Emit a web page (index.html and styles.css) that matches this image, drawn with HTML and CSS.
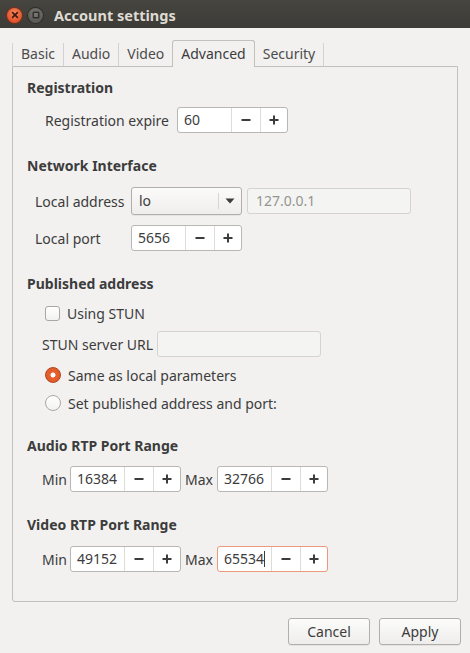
FILE: index.html
```html
<!DOCTYPE html>
<html>
<head>
<meta charset="utf-8">
<title>Account settings</title>
<link rel="stylesheet" href="styles.css">
</head>
<body>
<div class="window">
  <div class="titlebar">
    <span class="wbtn close"><svg width="14" height="14" viewBox="0 0 14 14"><path d="M4.6 4.6 L9.4 9.4 M9.4 4.6 L4.6 9.4" stroke="#3a1a10" stroke-width="1.6" stroke-linecap="round"/></svg></span>
    <span class="wbtn mini"><svg width="14" height="14" viewBox="0 0 14 14"><rect x="4.2" y="4.2" width="5.6" height="5.6" rx="0.8" fill="none" stroke="#2e2d2a" stroke-width="1.4"/></svg></span>
    <span class="wtitle">Account settings</span>
  </div>

  <div class="body">
    <div class="tabs">
      <span class="tab first">Basic</span>
      <span class="tab">Audio</span>
      <span class="tab">Video</span>
      <span class="tab active">Advanced</span>
      <span class="tab last">Security</span>
    </div>

    <div class="frame">
      <section class="sec sec-reg">
        <h2 class="head">Registration</h2>
        <div class="row reg-row">
          <span class="lbl">Registration expire</span>
          <div class="spin"><span class="sval">60</span><span class="sbtn"><svg width="10" height="10" viewBox="0 0 10 10"><rect x="0.5" y="4" width="9" height="2" fill="#3c3c3c"/></svg></span><span class="sbtn"><svg width="10" height="10" viewBox="0 0 10 10"><rect x="0.5" y="4" width="9" height="2" fill="#3c3c3c"/><rect x="4" y="0.5" width="2" height="9" fill="#3c3c3c"/></svg></span></div>
        </div>
      </section>

      <section class="sec sec-net">
        <h2 class="head">Network Interface</h2>
        <div class="netgrid">
          <span class="lbl">Local address</span>
          <div class="combo-row">
            <div class="combo"><span class="cval">lo</span><span class="carrow"><svg width="10" height="6" viewBox="0 0 10 6"><path d="M0.5 0.5 L9.5 0.5 L5 5.5 Z" fill="#3c3c3c"/></svg></span></div>
            <div class="entry disabled">127.0.0.1</div>
          </div>
          <span class="lbl">Local port</span>
          <div class="spin"><span class="sval">5656</span><span class="sbtn"><svg width="10" height="10" viewBox="0 0 10 10"><rect x="0.5" y="4" width="9" height="2" fill="#3c3c3c"/></svg></span><span class="sbtn"><svg width="10" height="10" viewBox="0 0 10 10"><rect x="0.5" y="4" width="9" height="2" fill="#3c3c3c"/><rect x="4" y="0.5" width="2" height="9" fill="#3c3c3c"/></svg></span></div>
        </div>
      </section>

      <section class="sec sec-pub">
        <h2 class="head">Published address</h2>
        <div class="opt opt-check"><span class="check"></span><span>Using STUN</span></div>
        <div class="row stun-row">
          <span class="lbl">STUN server URL</span>
          <div class="entry stun"></div>
        </div>
        <div class="opt"><span class="radio on"></span><span>Same as local parameters</span></div>
        <div class="opt"><span class="radio"></span><span>Set published address and port:</span></div>
      </section>

      <section class="sec sec-audio">
        <h2 class="head">Audio RTP Port Range</h2>
        <div class="row range-row">
          <span class="lbl lmin">Min</span>
          <div class="spin"><span class="sval">16384</span><span class="sbtn"><svg width="10" height="10" viewBox="0 0 10 10"><rect x="0.5" y="4" width="9" height="2" fill="#3c3c3c"/></svg></span><span class="sbtn"><svg width="10" height="10" viewBox="0 0 10 10"><rect x="0.5" y="4" width="9" height="2" fill="#3c3c3c"/><rect x="4" y="0.5" width="2" height="9" fill="#3c3c3c"/></svg></span></div>
          <span class="lbl lmax">Max</span>
          <div class="spin"><span class="sval">32766</span><span class="sbtn"><svg width="10" height="10" viewBox="0 0 10 10"><rect x="0.5" y="4" width="9" height="2" fill="#3c3c3c"/></svg></span><span class="sbtn"><svg width="10" height="10" viewBox="0 0 10 10"><rect x="0.5" y="4" width="9" height="2" fill="#3c3c3c"/><rect x="4" y="0.5" width="2" height="9" fill="#3c3c3c"/></svg></span></div>
        </div>
      </section>

      <section class="sec sec-video">
        <h2 class="head">Video RTP Port Range</h2>
        <div class="row range-row">
          <span class="lbl lmin">Min</span>
          <div class="spin"><span class="sval">49152</span><span class="sbtn"><svg width="10" height="10" viewBox="0 0 10 10"><rect x="0.5" y="4" width="9" height="2" fill="#3c3c3c"/></svg></span><span class="sbtn"><svg width="10" height="10" viewBox="0 0 10 10"><rect x="0.5" y="4" width="9" height="2" fill="#3c3c3c"/><rect x="4" y="0.5" width="2" height="9" fill="#3c3c3c"/></svg></span></div>
          <span class="lbl lmax">Max</span>
          <div class="spin focus"><span class="sval">65534<span class="caret"></span></span><span class="sbtn"><svg width="10" height="10" viewBox="0 0 10 10"><rect x="0.5" y="4" width="9" height="2" fill="#3c3c3c"/></svg></span><span class="sbtn"><svg width="10" height="10" viewBox="0 0 10 10"><rect x="0.5" y="4" width="9" height="2" fill="#3c3c3c"/><rect x="4" y="0.5" width="2" height="9" fill="#3c3c3c"/></svg></span></div>
        </div>
      </section>
    </div>

    <div class="actions">
      <button class="btn">Cancel</button>
      <button class="btn">Apply</button>
    </div>
  </div>
</div>
</body>
</html>
```

FILE: styles.css
```css
* { box-sizing: border-box; }
html, body {
  margin: 0;
  padding: 0;
  width: 470px;
  height: 653px;
  overflow: hidden;
  background: #f2f1f0;
  font-family: "Noto Sans", "Open Sans", sans-serif;
  font-size: 14px;
  color: #3c3c3c;
}
.window { width: 470px; height: 653px; display: flex; flex-direction: column; }

.titlebar {
  height: 28px;
  flex: none;
  background: linear-gradient(#46453f, #3c3b37);
  display: flex;
  align-items: center;
  padding-left: 7px;
  gap: 6px;
}
.wbtn {
  width: 15px; height: 15px; border-radius: 50%;
  display: flex; align-items: center; justify-content: center;
  margin-top: 2px;
}
.wbtn svg { display: block; }
.close { background: radial-gradient(circle at 50% 35%, #f7885c, #e2512a 70%); box-shadow: 0 0 0 1px #7a2f17; }
.mini { background: radial-gradient(circle at 50% 35%, #7b7a74, #5a5954 70%); box-shadow: 0 0 0 1px #2e2d29; }
.wtitle {
  margin-left: 5px;
  color: #dfdbd2;
  font-weight: bold;
  font-size: 14.5px;
  margin-top: 1px;
}

.body { flex: 1; padding: 12px 9px 0 12px; display: flex; flex-direction: column; }

.tabs { display: flex; height: 26px; align-items: flex-end; position: relative; z-index: 1; }
.tab {
  height: 23px;
  padding: 0 8px;
  line-height: 22px;
  border-left: 1px solid #d4d2ce;
  color: #4c4c4c;
}
.tab.last { border-right: 1px solid #d4d2ce; padding: 0 8px; }
.tab.active {
  height: 27px;
  line-height: 25px;
  padding: 0 8px;
  border: 1px solid #c2c0bb;
  border-bottom: none;
  border-radius: 3px 3px 0 0;
  background: #f2f1f0;
  margin-bottom: -1px;
  color: #3c3c3c;
}
.tab.active + .tab { border-left: none; }

.frame {
  width: 446px;
  height: 536px;
  border: 1px solid #c2c0bb;
  border-radius: 0 0 3px 3px;
  padding: 11px 0 0 14px;
  display: flex;
  flex-direction: column;
}
.head { margin: 0; font-size: 14px; font-weight: bold; line-height: 20px; height: 20px; color: #3c3c3c; }
.sec-net, .sec-pub { margin-top: 23px; }
.sec-audio, .sec-video { margin-top: 23px; }

.row { display: flex; align-items: center; }
.lbl { white-space: nowrap; color: #3c3c3c; }

.reg-row { margin-top: 9px; padding-left: 18px; height: 26px; }
.reg-row .lbl { width: 132px; }

.netgrid {
  margin-top: 11px;
  padding-left: 8px;
  display: grid;
  grid-template-columns: 96px auto;
  grid-template-rows: 28px 26px;
  row-gap: 10px;
  align-items: center;
  justify-items: start;
}
.combo-row { display: flex; align-items: center; gap: 5px; }

.spin {
  display: flex;
  height: 26px;
  border: 1px solid #b9b7b3;
  border-radius: 3px;
  background: #ffffff;
  overflow: hidden;
}
.sval {
  width: 53px;
  padding-left: 6px;
  line-height: 24px;
  color: #3c3c3c;
  position: relative;
}
.sbtn {
  width: 29px;
  border-left: 1px solid #dedcd8;
  display: flex;
  align-items: center;
  justify-content: center;
}
.sbtn svg { display: block; }
.sbtn:last-child { width: 27px; }
.spin.focus { border-color: #eb9b7b; }
.caret {
  display: inline-block;
  width: 1px; height: 16px;
  background: #3c3c3c;
  vertical-align: -3px;
}

.combo {
  display: flex;
  width: 111px;
  height: 28px;
  border: 1px solid #b1afab;
  border-radius: 3px;
  background: linear-gradient(#fbfbfa, #efeeec);
  box-shadow: 0 1px 0 rgba(0,0,0,0.05);
}
.cval { flex: 1; padding-left: 7px; line-height: 26px; }
.carrow {
  width: 23px;
  margin: 5px 0;
  border-left: 1px solid #d8d6d2;
  display: flex; align-items: center; justify-content: center;
}
.entry {
  height: 26px;
  border: 1px solid #cfcdc9;
  border-radius: 3px;
  line-height: 24px;
  padding-left: 8px;
}
.entry.disabled { width: 164px; background: #f4f4f3; color: #95948f; border-color: #d5d3cf; }

.opt { display: flex; align-items: center; height: 20px; padding-left: 18px; gap: 7px; }
.opt-check { margin-top: 9px; }
.check {
  width: 15px; height: 15px;
  border: 1px solid #a9a7a3;
  border-radius: 3px;
  background: linear-gradient(#ffffff, #f2f2f1);
}
.stun-row { margin-top: 8px; padding-left: 15px; gap: 4px; }
.entry.stun { width: 164px; background: #f4f4f3; border-color: #d5d3cf; }
.stun-row + .opt { margin-top: 8px; }
.opt + .opt { margin-top: 8px; }
.radio {
  width: 16px; height: 16px; border-radius: 50%;
  border: 1px solid #a9a7a3;
  background: linear-gradient(#ffffff, #f2f2f1);
}
.radio.on {
  border-color: #b3461f;
  background: radial-gradient(circle, #ffffff 0 2.2px, #e8622f 2.8px, #dc5625 100%);
}

.range-row { margin-top: 10px; padding-left: 15px; height: 26px; }
.sec-video .range-row { margin-top: 11px; }
.lmin { width: 28px; }
.lmax { width: 36px; padding-left: 4px; }

.actions {
  display: flex;
  justify-content: flex-end;
  gap: 9px;
  margin-top: 16px;
  padding-right: 0;
}
.btn {
  width: 82px;
  height: 27px;
  font-family: inherit;
  font-size: 14px;
  color: #3c3c3c;
  border: 1px solid #b1afab;
  border-radius: 3px;
  background: linear-gradient(#fcfcfb, #eeedeb);
  box-shadow: 0 1px 0 rgba(0,0,0,0.06);
  padding: 0;
}
```
